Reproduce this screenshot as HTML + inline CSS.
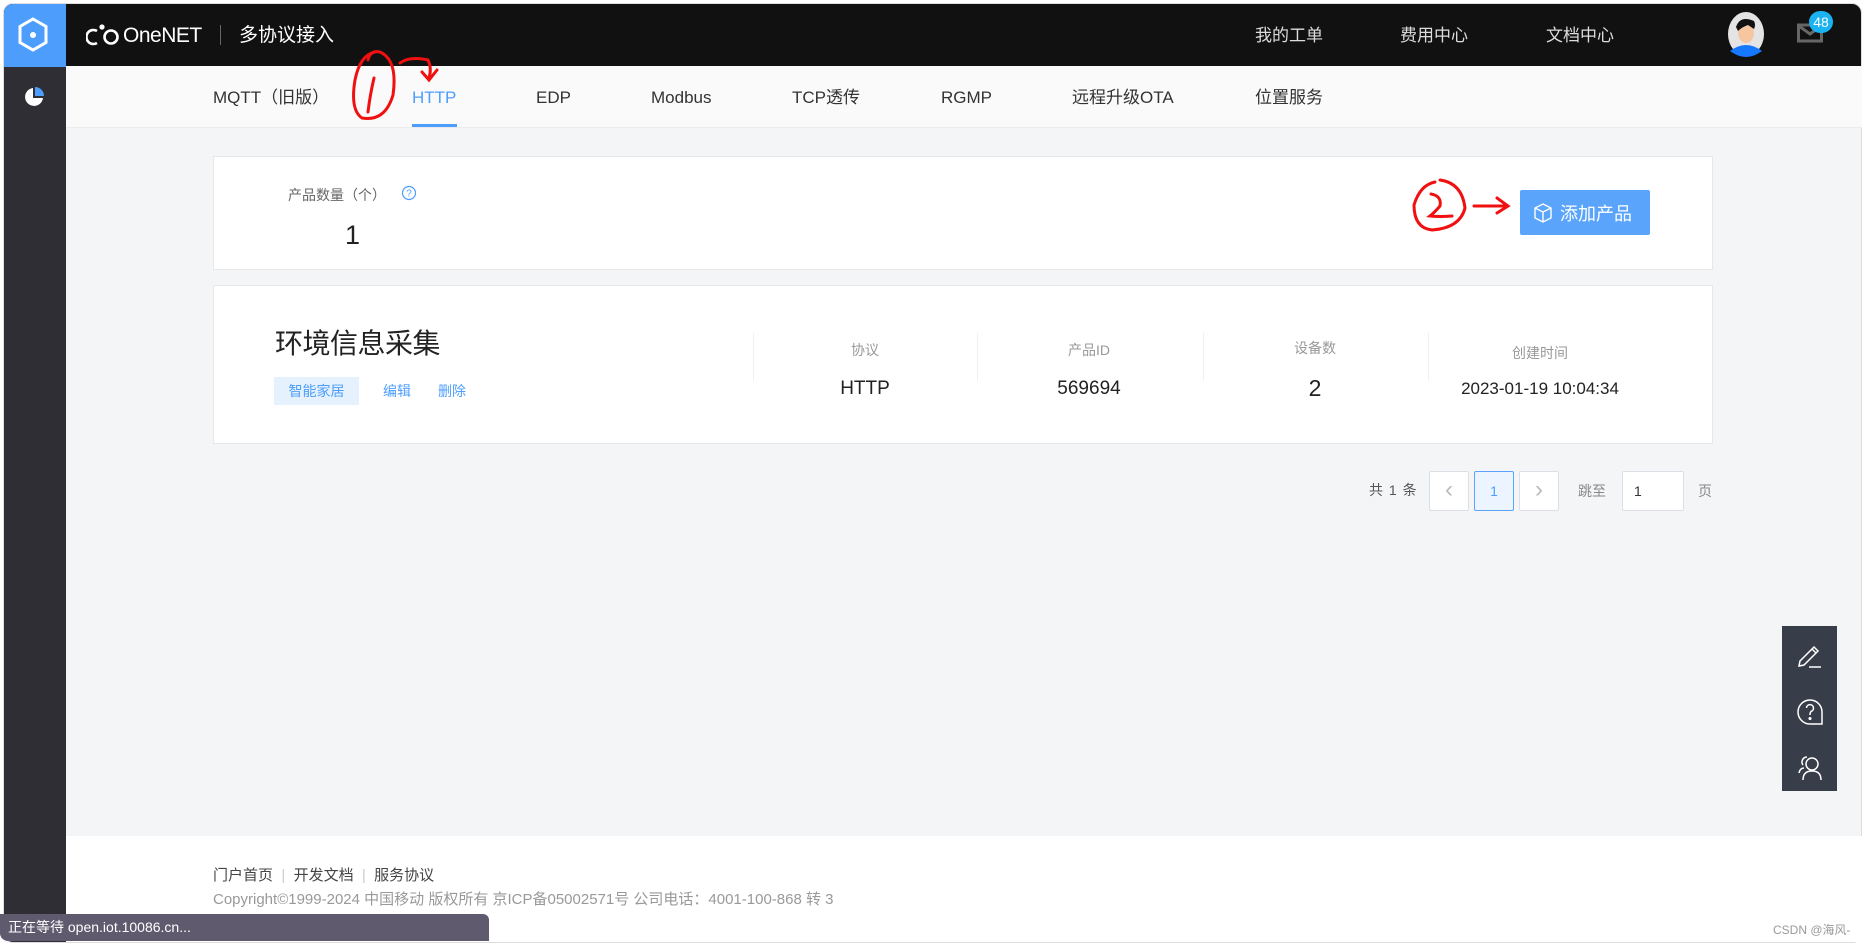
<!DOCTYPE html>
<html><head><meta charset="utf-8">
<style>
*{margin:0;padding:0;box-sizing:border-box}
body{width:1867px;height:945px;overflow:hidden;background:#fff;font-family:"Liberation Sans","Noto Sans CJK SC",sans-serif;position:relative}
.a{position:absolute}
.frame{left:3px;top:3px;width:1859px;height:940px;border-radius:10px;overflow:hidden;background:#f4f5f7;border:1px solid #ddd}
.t{white-space:nowrap;line-height:20px}
.n{top:88px;font-size:17px;color:#333}
</style></head><body>
<div class="a frame">
 <div class="a" style="left:0;top:0;width:1859px;height:63px;background:#111"></div>
 <div class="a" style="left:0;top:0;width:62px;height:940px;background:#2e2e34"></div>
 <div class="a" style="left:0;top:0;width:62px;height:63px;background:#4d9efc"></div>
</div>
<svg class="a" style="left:17px;top:17px" width="32" height="36" viewBox="0 0 32 36"><polygon points="16,2 29,9.5 29,25.5 16,33 3,25.5 3,9.5" fill="none" stroke="#fff" stroke-width="3"/><circle cx="16" cy="18" r="3" fill="#fff"/></svg>
<svg class="a" style="left:24px;top:87px" width="20" height="20" viewBox="0 0 20 20"><path d="M9 1 A9 9 0 1 0 19 11 L9 11 Z" fill="#fff"/><path d="M11 0 L11 9 L20 9 A9 9 0 0 0 11 0Z" fill="#4d9efc"/></svg>
<svg class="a" style="left:86px;top:23px" width="36" height="24" viewBox="0 0 36 24"><path d="M11 8 A7 7 0 1 0 11 20" fill="none" stroke="#fff" stroke-width="2.6"/><circle cx="25" cy="14" r="6.5" fill="none" stroke="#fff" stroke-width="2.6"/><circle cx="16" cy="4" r="2.6" fill="#fff"/></svg>
<div class="a t" style="left:123px;top:26px;color:#fff;font-size:21px;letter-spacing:-0.5px">OneNET</div>
<div class="a" style="left:220px;top:25px;width:1px;height:20px;background:#666"></div>
<div class="a t" style="left:239px;top:26px;color:#fff;font-size:19px">多协议接入</div>
<div class="a t" style="left:1255px;top:26px;color:#ddd;font-size:17px">我的工单</div>
<div class="a t" style="left:1400px;top:26px;color:#ddd;font-size:17px">费用中心</div>
<div class="a t" style="left:1546px;top:26px;color:#ddd;font-size:17px">文档中心</div>
<svg class="a" style="left:1724px;top:11px" width="44" height="46" viewBox="0 0 44 46"><ellipse cx="22" cy="23" rx="18" ry="22" fill="#e4e4e4"/><path d="M6 40 Q22 28 38 40 Q30 46 22 46 Q14 46 6 40Z" fill="#1677ff"/><ellipse cx="22" cy="22" rx="8" ry="10" fill="#f5c6a0"/><path d="M12 16 Q16 4 30 10 Q32 14 30 18 L24 14 Q18 16 14 20Z" fill="#111"/></svg>
<svg class="a" style="left:1797px;top:22px" width="26" height="22" viewBox="0 0 26 22"><rect x="1.5" y="3" width="23" height="16" fill="none" stroke="#666" stroke-width="3"/><path d="M2 4 L13 12 L24 4" fill="none" stroke="#666" stroke-width="3"/></svg>
<div class="a" style="left:1809px;top:11px;width:24px;height:22px;border-radius:11px;background:#1ab2f0;color:#fff;font-size:14px;text-align:center;line-height:22px">48</div>
<div class="a" style="left:66px;top:66px;width:1796px;height:62px;background:#fafafa;border-bottom:1px solid #ebebeb"></div>
<div class="a t n" style="left:213px">MQTT（旧版）</div>
<div class="a t n" style="left:412px;color:#4d9efc">HTTP</div>
<div class="a" style="left:412px;top:124px;width:45px;height:3px;background:#4d9efc"></div>
<div class="a t n" style="left:536px">EDP</div>
<div class="a t n" style="left:651px">Modbus</div>
<div class="a t n" style="left:792px">TCP透传</div>
<div class="a t n" style="left:941px">RGMP</div>
<div class="a t n" style="left:1072px">远程升级OTA</div>
<div class="a t n" style="left:1255px">位置服务</div>
<div class="a" style="left:213px;top:156px;width:1500px;height:114px;background:#fff;border:1px solid #e8e8e8"></div>
<div class="a t" style="left:288px;top:185px;font-size:14px;color:#666">产品数量（个）</div>
<svg class="a" style="left:401px;top:185px" width="16" height="16" viewBox="0 0 16 16"><circle cx="8" cy="8" r="6.5" fill="none" stroke="#4d9efc" stroke-width="1.2"/><text x="8" y="11.5" font-size="10" fill="#4d9efc" text-anchor="middle" font-family="Liberation Sans">?</text></svg>
<div class="a t" style="left:345px;top:225px;font-size:27px;color:#222">1</div>
<div class="a" style="left:1520px;top:190px;width:130px;height:45px;background:#5aa5fb;border-radius:2px"></div>
<svg class="a" style="left:1532px;top:202px" width="22" height="22" viewBox="0 0 22 22" fill="none" stroke="#fff" stroke-width="1.4"><path d="M11 2 L19 6 L19 16 L11 20 L3 16 L3 6 Z M3 6 L11 10 L19 6 M11 10 L11 20"/></svg>
<div class="a t" style="left:1560px;top:204px;font-size:18px;color:#fff">添加产品</div>
<div class="a" style="left:213px;top:285px;width:1500px;height:159px;background:#fff;border:1px solid #e8e8e8"></div>
<div class="a t" style="left:275px;top:328px;font-size:28px;line-height:32px;color:#222;letter-spacing:-0.5px">环境信息采集</div>
<div class="a" style="left:274px;top:377px;width:85px;height:28px;background:#e6f1fe;color:#4d9efc;font-size:14px;text-align:center;line-height:28px">智能家居</div>
<div class="a t" style="left:383px;top:381px;font-size:14px;color:#4d9efc">编辑</div>
<div class="a t" style="left:438px;top:381px;font-size:14px;color:#4d9efc">删除</div>
<div class="a" style="left:753px;top:333px;width:1px;height:48px;background:#f0f0f0"></div>
<div class="a" style="left:977px;top:333px;width:1px;height:48px;background:#f0f0f0"></div>
<div class="a" style="left:1203px;top:333px;width:1px;height:48px;background:#f0f0f0"></div>
<div class="a" style="left:1428px;top:333px;width:1px;height:48px;background:#f0f0f0"></div>
<div class="a t" style="left:765px;width:200px;text-align:center;top:340px;font-size:14px;color:#999">协议</div>
<div class="a t" style="left:989px;width:200px;text-align:center;top:340px;font-size:14px;color:#999">产品ID</div>
<div class="a t" style="left:1215px;width:200px;text-align:center;top:338px;font-size:14px;color:#999">设备数</div>
<div class="a t" style="left:1440px;width:200px;text-align:center;top:343px;font-size:14px;color:#999">创建时间</div>
<div class="a t" style="left:765px;width:200px;text-align:center;top:379px;font-size:19px;color:#222">HTTP</div>
<div class="a t" style="left:989px;width:200px;text-align:center;top:379px;font-size:19px;color:#222">569694</div>
<div class="a t" style="left:1215px;width:200px;text-align:center;top:376px;font-size:23px;line-height:24px;color:#222">2</div>
<div class="a t" style="left:1440px;width:200px;text-align:center;top:379px;font-size:17px;color:#222">2023-01-19 10:04:34</div>
<div class="a t" style="left:1369px;top:480px;font-size:14px;color:#555;letter-spacing:1px">共 1 条</div>
<div class="a" style="left:1429px;top:471px;width:40px;height:40px;background:#fff;border:1px solid #dcdfe6;border-radius:2px;color:#bbb;text-align:center;line-height:36px;font-size:24px">‹</div>
<div class="a" style="left:1474px;top:471px;width:40px;height:40px;background:#ecf5ff;border:1px solid #5aa5fb;border-radius:2px;color:#4d9efc;text-align:center;line-height:38px;font-size:14px">1</div>
<div class="a" style="left:1519px;top:471px;width:40px;height:40px;background:#fff;border:1px solid #dcdfe6;border-radius:2px;color:#bbb;text-align:center;line-height:36px;font-size:24px">›</div>
<div class="a t" style="left:1578px;top:481px;font-size:14px;color:#888">跳至</div>
<div class="a" style="left:1622px;top:471px;width:62px;height:40px;background:#fff;border:1px solid #dcdfe6;border-radius:2px;color:#333;padding-left:11px;line-height:38px;font-size:14px">1</div>
<div class="a t" style="left:1698px;top:481px;font-size:14px;color:#888">页</div>
<div class="a" style="left:66px;top:836px;width:1796px;height:106px;background:#fff"></div>
<div class="a t" style="left:213px;top:866px;font-size:15px;color:#444">门户首页 <span style="color:#ccc">&nbsp;|&nbsp;</span> 开发文档 <span style="color:#ccc">&nbsp;|&nbsp;</span> 服务协议</div>
<div class="a t" style="left:213px;top:890px;font-size:15px;color:#999">Copyright©1999-2024 中国移动 版权所有 京ICP备05002571号 公司电话：4001-100-868 转 3</div>
<div class="a t" style="left:0;top:914px;width:489px;height:27px;background:#5f5a6e;border-radius:0 6px 0 8px;color:#fff;font-size:14px;line-height:27px;padding-left:8px">正在等待 open.iot.10086.cn...</div>
<div class="a t" style="left:1773px;top:920px;font-size:12px;color:#999">CSDN @海风-</div>
<div class="a" style="left:1782px;top:626px;width:55px;height:165px;background:#383d4a"></div>
<svg class="a" style="left:1795px;top:642px" width="30" height="30" viewBox="0 0 30 30" fill="none" stroke="#fff" stroke-width="1.5"><path d="M4 24 L5 19 L19 5 L23 9 L9 23 Z M17 7 L21 11"/><path d="M14 25 L26 25"/></svg>
<svg class="a" style="left:1795px;top:697px" width="30" height="30" viewBox="0 0 30 30" fill="none" stroke="#fff" stroke-width="1.5"><path d="M15 27 A12 12 0 1 1 27 15 L27 27 Z"/><path d="M11.5 11 A3.5 3.5 0 1 1 16 14.5 Q15 15.5 15 18"/><circle cx="15" cy="21.5" r="0.8" fill="#fff"/></svg>
<svg class="a" style="left:1795px;top:752px" width="30" height="30" viewBox="0 0 30 30" fill="none" stroke="#fff" stroke-width="1.5"><circle cx="17" cy="12" r="6"/><path d="M8 28 Q8 19 17 19 Q26 19 26 28"/><path d="M12 5 A5 5 0 0 0 8 13 M4 21 Q5 16 9 16"/></svg>
<svg class="a" style="left:0;top:0" width="1867" height="945" fill="none" stroke="#f01010" stroke-width="3" stroke-linecap="round">
<path d="M375 52 Q360 55 355 80 Q350 110 362 118 Q385 122 393 95 Q398 60 380 52 Q370 50 368 60"/>
<path d="M374 78 Q370 95 368 112"/>
<path d="M400 63 Q410 56 428 60 Q432 68 429 78 M422 72 L429 80 L437 70"/>
<path d="M1435 182 Q1420 185 1414 205 Q1414 228 1432 230 Q1460 228 1465 208 Q1462 183 1440 180"/>
<path d="M1431 194 Q1442 196 1440 206 Q1434 213 1430 216 Q1440 217 1452 216"/>
<path d="M1474 206 L1508 206 M1497 198 L1508 206 L1497 213"/>
</svg>
</body></html>
